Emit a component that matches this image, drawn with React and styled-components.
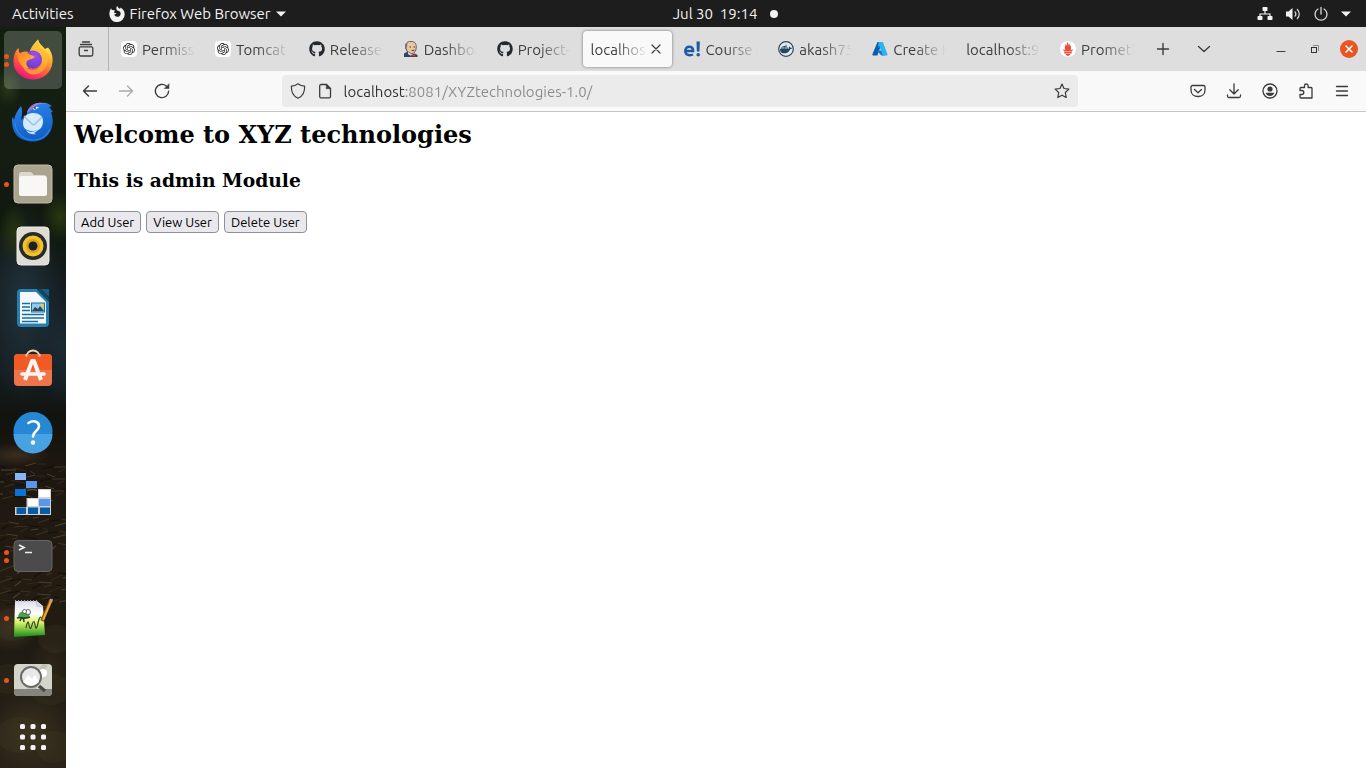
import React from "react";
import styled, { createGlobalStyle, css } from "styled-components";
import { SiOpenai, SiPrometheus, SiDocker } from "react-icons/si";
import { FaGithub } from "react-icons/fa";

const UI_FONT = '"Ubuntu", "Noto Sans", "Open Sans", sans-serif';

const GlobalStyle = createGlobalStyle`
  *, *::before, *::after { box-sizing: border-box; }
  body { margin: 0; background: #fff; font-family: ${UI_FONT}; }
  button { font: inherit; color: inherit; border: 0; padding: 0; background: none; cursor: default; }
  svg { display: block; flex: none; }
`;

/* ---------- desktop shell ---------- */

const Desktop = styled.div`
  display: grid;
  grid-template: 27px minmax(0, 1fr) / 66px minmax(0, 1fr);
  min-height: 100vh;
`;

const TopBar = styled.header`
  grid-column: 1 / -1;
  display: grid;
  grid-template-columns: minmax(0, 15fr) auto minmax(0, 13fr);
  align-items: center;
  padding: 0 15px 0 12px;
  background: #1d1d1d;
  color: #f2f2f2;
  font-size: 15px;
  line-height: 20px;
`;

const BarGroup = styled.div`
  display: flex;
  align-items: center;
  justify-content: ${(p) => (p.$end ? "flex-end" : "flex-start")};
  gap: ${(p) => p.$gap}px;
`;

const BarButton = styled.button`
  display: flex;
  align-items: center;
  gap: ${(p) => p.$gap || 5}px;
  white-space: pre;
`;

const StatusDot = styled.span`
  width: 8px;
  height: 8px;
  border-radius: 50%;
  background: #f2f2f2;
`;

const Dock = styled.nav`
  position: relative;
  display: flex;
  flex-direction: column;
  gap: 4px;
  padding: 4px;
  background:
    radial-gradient(ellipse 14px 20px at 8px 60px, #2b3a1c, transparent),
    radial-gradient(ellipse 20px 26px at 60px 190px, #28380f, transparent),
    radial-gradient(ellipse 16px 30px at 14px 205px, #26340f, transparent),
    radial-gradient(ellipse 40px 100px at 24px 275px, #22323d, transparent),
    radial-gradient(ellipse 24px 60px at 62px 320px, #1b2a33, transparent),
    radial-gradient(ellipse 34px 12px at 16px 428px, #3b2e1f, transparent),
    radial-gradient(ellipse 30px 26px at 10px 600px, #3a3120, transparent),
    radial-gradient(ellipse 24px 30px at 50px 640px, #2d2618, transparent),
    radial-gradient(ellipse 40px 40px at 30px 705px, #3a3220, transparent),
    linear-gradient(#12200f 0, #151c12 130px, #10170f 200px, #141d20 260px, #151d20 350px, #11130f 390px, #1b1610 430px, #241c12 540px, #1f1a12 620px, #2a2418 100%);
`;

const Wallpaper = styled.svg`
  position: absolute;
  left: 0;
  top: 390px;
`;

const DockItem = styled.button`
  position: relative;
  display: flex;
  align-items: center;
  justify-content: center;
  height: ${(p) => (p.$short ? 50 : 58)}px;
  border-radius: 5px;
  background: ${(p) => (p.$active ? "rgba(255, 255, 255, 0.2)" : "none")};
`;

const RunningDots = styled.span`
  position: absolute;
  left: 0;
  top: 0;
  bottom: 0;
  display: flex;
  flex-direction: column;
  justify-content: center;
  gap: 3px;
  i {
    width: 5px;
    height: 5px;
    border-radius: 50%;
    background: #e95420;
  }
`;

/* ---------- browser ---------- */

const Browser = styled.section`
  display: flex;
  flex-direction: column;
  min-width: 0;
  background: #fff;
`;

const TabStrip = styled.div`
  display: flex;
  align-items: stretch;
  height: 44px;
  background: #dedede;
  color: #3d3d3d;
  font-size: 15px;
  line-height: 20px;
`;

const StripButton = styled.button`
  display: grid;
  place-items: center;
  width: ${(p) => p.$w}px;
  ${(p) =>
    p.$divider &&
    css`
      padding-right: 2px;
      border-right: 1px solid #b4b4b4;
      margin-right: 2px;
    `}
`;

const Tabs = styled.div`
  display: flex;
  flex: 0 1 1033px;
  min-width: 0;
`;

const Tab = styled.div`
  display: flex;
  align-items: center;
  flex: 1 1 0;
  min-width: 0;
  margin: 4px 2px;
  padding: 0 8px;
  border-radius: 4px;
  ${(p) =>
    p.$active &&
    css`
      background: #f9f9f9;
      box-shadow: 0 0 3px rgba(0, 0, 0, 0.5);
    `}
`;

const TabButton = styled.button`
  display: flex;
  align-items: center;
  gap: 5px;
  flex: 1;
  min-width: 0;
  text-align: left;
`;

const TabLabel = styled.span`
  flex: 1;
  padding-top: 2px;
  overflow: hidden;
  white-space: nowrap;
  mask-image: linear-gradient(to left, transparent, #000 32px);
`;

const Spacer = styled.div`
  flex: 1 1 0;
`;

const Toolbar = styled.div`
  display: flex;
  align-items: center;
  height: 41px;
  padding: 0 6px;
  background: #f9f9f9;
  border-bottom: 1px solid #c4c4c4;
  color: #3b3b3b;
`;

const ToolButton = styled.button`
  display: grid;
  place-items: center;
  width: 36px;
  height: 32px;
  color: ${(p) => (p.disabled ? "#ababab" : "#3b3b3b")};
`;

const UrlBar = styled.div`
  display: flex;
  align-items: center;
  flex: 8 1 0;
  min-width: 0;
  height: 32px;
  margin: 0 4px;
  padding: 0 8px;
  gap: 11px;
  border-radius: 4px;
  background: #ebebeb;
`;

const UrlInput = styled.input`
  flex: 1;
  min-width: 0;
  height: 24px;
  padding: 0;
  border: 0;
  outline: 0;
  font: 15px/20px ${UI_FONT};
  color: #8a8a8a;
  background: linear-gradient(to right, #2f2f2f 62px, #8a8a8a 62px);
  background-clip: text;
  -webkit-text-fill-color: transparent;
`;

const Page = styled.main`
  padding: 8px;
  color: #000;
  font-family: "DejaVu Serif", serif;
`;

const Title = styled.h2`
  margin: 0 0 20px;
  font-size: 24px;
  line-height: 29px;
`;

const Subtitle = styled.h3`
  margin: 0 0 19px;
  line-height: 23px;
`;

const Actions = styled.div`
  display: flex;
  gap: 5px;
`;

const ActionButton = styled.button`
  height: 22px;
  padding: 0 6px;
  border: 1px solid #8f8f9d;
  border-radius: 4px;
  background: #e9e9ed;
  font: 13px/18px ${UI_FONT};
`;

/* ---------- line icons ---------- */

const Line = ({ size = 16, w = 1.3, children }) => (
  <svg width={size} height={size} viewBox="0 0 16 16" fill="none" stroke="currentColor" strokeWidth={w} strokeLinecap="round" strokeLinejoin="round" aria-hidden="true">
    {children}
  </svg>
);

const FirefoxMono = () => (
  <svg width="16" height="16" viewBox="0 0 16 16" aria-hidden="true">
    <path fill="#f2f2f2" d="M8.300 0c.3 1.300 1.300 2 2.500 2.800.5-.1.800-.5.700-1.200C14 2.900 15.700 5.300 15.700 8.400A7.600 7.600 0 0 1 .4 8.500C.3 6 1 3.700 2.300 2.300c0 .8.200 1.300.5 1.800 1.100-.3 2.300-.1 3.400.7-.8.400-1.300 1-1.300 1.700.5.500 1.500.5 2.500.5-.2.900-1.300 1-2.100 1.600.5 1.500 1.700 2.200 3 2.200 2 0 3.500-1.600 3.300-3.500C11.400 5.600 9.800 4.600 8.300 4.600 7 3 7 1.200 8.300 0Z" />
  </svg>
);

const Caret = () => (
  <svg width="10" height="6" viewBox="0 0 10 6" aria-hidden="true"><path d="M0 .5h10L5 5.500Z" fill="#f2f2f2" /></svg>
);

const Network = () => (
  <svg width="16" height="16" viewBox="0 0 16 16" aria-hidden="true">
    <path d="M8 4v4M3 12V8h10v4" fill="none" stroke="#f2f2f2" strokeWidth="1.200" />
    <g fill="#f2f2f2"><rect x="5.500" y="1" width="5" height="4" rx=".8" /><rect x=".5" y="10" width="5" height="4" rx=".8" /><rect x="10.500" y="10" width="5" height="4" rx=".8" /></g>
  </svg>
);

const Volume = () => (
  <svg width="16" height="16" viewBox="0 0 16 16" aria-hidden="true">
    <path d="M1 5.500h2.500L7.500 2v12l-4-3.500H1Z" fill="#f2f2f2" />
    <path d="M10 5.800c1.200 1.400 1.200 3 0 4.400M12.300 3.500c2.600 2.600 2.600 6.400 0 9" fill="none" stroke="#d8d8d8" strokeWidth="1.200" strokeLinecap="round" />
  </svg>
);

const Power = () => (
  <svg width="16" height="16" viewBox="0 0 16 16" fill="none" stroke="#d8d8d8" strokeWidth="1.300" strokeLinecap="round" aria-hidden="true">
    <path d="M8 1.500V8M5 3a6 6 0 1 0 6 0" />
  </svg>
);

const FirefoxView = () => (
  <Line><path d="M4.500 1h7M2.500 3.500h11M2.500 5.800h11A1.300 1.300 0 0 1 14.800 7v6.500a1.500 1.500 0 0 1-1.500 1.500H2.700a1.500 1.500 0 0 1-1.500-1.500V7a1.300 1.300 0 0 1 1.300-1.200ZM6.500 9.500h3" /></Line>
);

const Shield = () => <Line w={1.2}><path d="M8 .8c2 1.600 4.200 2.300 6.600 2.300C14.900 8.500 12.800 13.200 8 15.200 3.200 13.200 1.100 8.500 1.400 3.100 3.800 3.100 6 2.400 8 .8Z" /></Line>;
const PageIcon = () => (
  <Line><path d="M4 1.500h5.500l4 4v8a1.300 1.300 0 0 1-1.300 1.300H4a1.300 1.300 0 0 1-1.300-1.300V2.800A1.300 1.300 0 0 1 4 1.500Z" /><path d="M9.300 1.500v4.200h4.200Z" fill="currentColor" strokeWidth=".6" /></Line>
);
const Star = () => <Line w={1.2}><path d="m8 1 2 4.500 4.900.6-3.600 3.400.9 5L8 12.200l-4.200 2.300.9-5L1.100 6.100 6 5.500Z" /></Line>;

const Reload = () => (
  <Line w={1.4}><path d="M14.600 8.200A6.600 6.600 0 1 1 12.300 3" /><path d="M15 1v4.500h-4.500Z" fill="currentColor" strokeWidth=".5" /></Line>
);

const Account = () => (
  <svg width="16" height="16" viewBox="0 0 16 16" aria-hidden="true">
    <circle cx="8" cy="8" r="7" fill="none" stroke="currentColor" strokeWidth="1.300" />
    <circle cx="8" cy="6" r="2.600" fill="currentColor" /><path d="M3.700 9.800h8.600C11.500 12 9.900 13 8 13s-3.500-1-4.300-3.200Z" fill="currentColor" />
  </svg>
);

/* ---------- favicons ---------- */

const OpenAiIcon = () => (
  <svg width="16" height="16" viewBox="0 0 16 16" aria-hidden="true">
    <rect width="16" height="16" rx="4" fill="#fff" /><SiOpenai x="2" y="2" size={12} color="#222" />
  </svg>
);

const JenkinsIcon = () => (
  <svg width="16" height="16" viewBox="0 0 16 16" aria-hidden="true">
    <path d="M2.800 7C2 2.500 4 .5 8 .4c4 .1 5.600 2.600 5.200 6.600-.2 3-1.500 5-4.500 5.600L4.500 11Z" fill="#e9c8a4" stroke="#4a3d33" strokeWidth=".8" />
    <path d="M2.300 8C1.500 5 2 2.500 4.800 1.200 3.900 3 4.700 5 3.700 6.500 3.500 8 3 8.500 2.300 8Z" fill="#7d7464" />
    <path d="M6.500 6h1.500M10.500 6H12M8.500 9.300c1 .4 2 .3 3-.2" stroke="#3a302a" strokeWidth=".9" fill="none" />
    <path d="M1 16v-3.500l4-2 4 3 3-1 2.500 1.500V16Z" fill="#2c4560" /><path d="m7 15.500.5-2.500 2.500.7 2.500-1v3l-2.500-.7Z" fill="#c9353b" /><path d="m5 11 4 2.500-1.500 1L5 13Z" fill="#e8e8e8" />
  </svg>
);

const EdurekaIcon = () => (
  <svg width="16" height="16" viewBox="0 0 16 16" aria-hidden="true">
    <path d="M1.500 10h7.600c0-3-1.300-4.300-3.700-4.300S1.300 7.200 1.300 10 2.800 14.200 5.700 14.200c1.300 0 2.300-.2 3.300-.7" fill="none" stroke="#1b5ba3" strokeWidth="2.500" />
    <path d="M12.500 .5h3.300l-.3 10h-2.700Z" fill="#1b5ba3" /><circle cx="14.200" cy="13.700" r="1.800" fill="#1b5ba3" />
  </svg>
);

const DockerIcon = () => (
  <svg width="16" height="16" viewBox="0 0 16 16" aria-hidden="true">
    <circle cx="8" cy="8" r="7.300" fill="#e6ecef" stroke="#27475e" strokeWidth="1.200" /><SiDocker x="2" y="2" size={12} color="#27475e" />
  </svg>
);

const AzureIcon = () => (
  <svg width="16" height="16" viewBox="0 0 16 16" aria-hidden="true">
    <path d="M5.500 1h4.700L5.400 14.500H1.200c-.8 0-1-.6-.8-1.200Z" fill="#0b5cab" />
    <path d="M4.500 9.500h7l1.300 5H9.500Z" fill="#0a78d4" />
    <path d="M6.500 1h4c.3 0 .5.200.6.500l4.400 12c.2.600-.2 1-.8 1h-3.800L7 4.500 6 7.500Z" fill="#2bb4ee" />
  </svg>
);

const PrometheusIcon = () => (
  <svg width="16" height="16" viewBox="0 0 16 16" aria-hidden="true">
    <circle cx="8" cy="8" r="7" fill="#ee4b37" /><SiPrometheus x="0" y="0" size={16} color="#fff" />
  </svg>
);

/* ---------- dock icons ---------- */

const Icon = ({ children }) => (
  <svg width="44" height="44" viewBox="0 0 44 44" aria-hidden="true">{children}</svg>
);

const Firefox = () => (
  <Icon>
    <defs>
      <linearGradient id="ffBody" x1=".8" y1=".1" x2=".35" y2="1"><stop offset="0" stopColor="#fff04a" /><stop offset=".35" stopColor="#ffa72e" /><stop offset=".65" stopColor="#ff5a3c" /><stop offset="1" stopColor="#f0147e" /></linearGradient>
      <radialGradient id="ffGlobe" cx=".6" cy=".3" r=".8"><stop offset="0" stopColor="#a24ff0" /><stop offset="1" stopColor="#5a3bc8" /></radialGradient>
      <linearGradient id="ffTail" x1="0" y1="0" x2="1" y2="1"><stop offset="0" stopColor="#ff7a2a" /><stop offset="1" stopColor="#ffbd32" /></linearGradient>
    </defs>
    <path d="M27 1.500c1 4 4 6 7 9.500l3-1.500c4 5 5 9.500 4.500 14.500C40.500 35 32 41.500 22 41.500S2.500 34 2.500 24c0-6 1.500-11 5-14 0 3 0 4 1 6 3-3 7-3 10-1 1-6 5-9.500 8.500-13.500Z" fill="url(#ffBody)" />
    <path d="M27 1.500c-4 3.500-6 7.500-6 11.500 5 0 9 3 10 8 1 6-3 11-9 11-6 0-10-4-12-9 2 10 8 15 16 13 8-2 12-10 10-18-2-7-8-9-9-16.500Z" fill="#ffbd35" opacity=".65" />
    <circle cx="22" cy="21.500" r="9" fill="url(#ffGlobe)" />
    <path d="M7.500 10c0 3 1 5 2 6 3-2 6-2 9 .5 2 1 4 1 5 2-1 3-4 2-7 4-2 2-1 5 1 8-6-1-10-5-11-12-.5-4 0-6 1-8.500Z" fill="url(#ffTail)" />
  </Icon>
);

const Thunderbird = () => (
  <Icon>
    <defs><linearGradient id="tb" x1=".4" y1="0" x2=".6" y2="1"><stop offset="0" stopColor="#2b82e8" /><stop offset="1" stopColor="#0d5cc4" /></linearGradient></defs>
    <path d="M10 6c2 5 1 9 0 14l6-6C17 6 24 2 31 3c4-1 7 1 10 3l-3 1 4 5-2 .5c5 12-1 29-18 29C7 41.500 1 32 1 21c0-2 0-3 1-4l1 3c1-6 4-10 7-14Z" fill="url(#tb)" />
    <path d="M16 12C20 3 28 1 36 4c-7-1-12 1-15 5l-5 4Z" fill="#a878dd" />
    <path d="M12 23c0-6 4-10 10-10s10 3 10 8c0 7-4 10-10 10s-10-2-10-8Z" fill="#d6ebff" />
    <path d="m13 16 8 8c1 1 2 1 3 0l7-7" fill="none" stroke="#9cc2e8" strokeWidth="1.500" />
    <path d="M15 30c4 3 8 2 13-1-2 2-4 4-5 4 1 1 2 1 3 1-5 1-9 0-11-4Z" fill="#bfe1ff" />
    <path d="M22 8.500q3-3 6-1l-5 2.500Z" fill="#fff" /><circle cx="24" cy="8" r="1" fill="#123b7a" />
    <path d="M4 23c1 10 8 17 18 17 8 0 14-4 17-11" fill="none" stroke="#4696ef" strokeWidth="1.200" opacity=".6" />
  </Icon>
);

const Files = () => (
  <Icon>
    <rect x="3" y="3" width="38" height="38" rx="4" fill="#aaa38e" stroke="#c1bbab" />
    <path d="M8 12q0-2 2-2h10l3 3h10q2 0 2 2v15H8Z" fill="#ddd8ce" /><rect x="8" y="14" width="28" height="20" rx="2" fill="#f8f7f5" />
  </Icon>
);

const Rhythmbox = () => (
  <Icon>
    <rect x="6" y="3" width="32" height="38" rx="4" fill="#dfdcd3" stroke="#eeece6" />
    <circle cx="22" cy="22" r="14" fill="#292a2e" /><circle cx="22" cy="22" r="10.500" fill="#f2c22c" /><circle cx="22" cy="22" r="7" fill="#b88c14" opacity=".5" /><circle cx="22" cy="22" r="4.500" fill="#1f2023" />
  </Icon>
);

const Writer = () => (
  <Icon>
    <path d="M10 3h17l11 10v24a4 4 0 0 1-4 4H10a4 4 0 0 1-4-4V7a4 4 0 0 1 4-4Z" fill="#277fae" />
    <path d="M30 3h8v8Z" fill="#1a5f88" /><path d="M26 3h4l8 9v4L26 4Z" fill="#134660" />
    <path d="M9 6h16l10 10v21.500H9Z" fill="#f5f8fa" />
    <path d="M11 17.500h8M11 21h8M11 24.500h8M11 28.500h22M11 32h22M11 35.500h16" stroke="#176d9e" strokeWidth="1.600" />
    <rect x="20.500" y="17" width="13" height="9" fill="#8fcbed" stroke="#176d9e" /><path d="m21 25 3-4 3 2 2-3 4 5Z" fill="#354552" /><circle cx="31" cy="19" r="1.500" fill="#f8cf28" />
  </Icon>
);

const Software = () => (
  <Icon>
    <path d="M15.500 9.500c0-9.500 13-9.500 13 0" fill="none" stroke="#e7dab5" strokeWidth="2" />
    <rect x="3" y="6" width="38" height="32" rx="4" fill="#ef7449" /><path d="M3 22V10a4 4 0 0 1 4-4h30a4 4 0 0 1 4 4v12Z" fill="#f05a24" />
    <path d="M15.500 6v2.500M28.500 6v2.500" stroke="#e7dab5" strokeWidth="2" />
    <path d="m14 32 7-19h2l7 19" fill="none" stroke="#f7f5f2" strokeWidth="4" strokeLinejoin="round" /><path d="M11 26h22" stroke="#f7f5f2" strokeWidth="3.500" strokeLinecap="round" />
  </Icon>
);

const Help = () => (
  <Icon>
    <circle cx="22" cy="21.500" r="19.500" fill="#2688d4" /><path d="M2.500 24h39a19.500 19.500 0 0 1-39 0Z" fill="#46a2e0" />
    <path d="M17.500 13c4-3 10.500-2 10.500 3 0 5-6 5-6 10.500" fill="none" stroke="#fff" strokeWidth="2.600" strokeLinecap="round" /><circle cx="22" cy="32.500" r="2.200" fill="#fff" />
  </Icon>
);

const Blocks = () => (
  <Icon>
    <path d="M4 35h11.500v-9H27v-9h13v26H4Z" fill="#d1d1cf" />
    <rect x="4" y="1" width="11" height="7" fill="#86b7f8" /><rect x="15" y="9" width="11" height="7" fill="#5797ec" /><rect x="4" y="17" width="11" height="7" fill="#0874d8" />
    <path d="M16 18.500q6-2 10 0" fill="none" stroke="#594c28" strokeWidth="1.500" />
    <rect x="28" y="18" width="11" height="7" fill="#fff" /><rect x="17" y="27" width="10" height="7" fill="#fff" /><rect x="28" y="27" width="11" height="7" fill="#5797ec" />
    <path d="M5.500 35.500H15V42H5.500ZM17 35.500h10V42H17ZM29 35.500h10V42H29Z" fill="#075ca5" />
  </Icon>
);

const Terminal = () => (
  <Icon>
    <rect x="3" y="6.500" width="38" height="31" rx="4" fill="#4b4b4b" stroke="#656565" />
    <path d="m8 11 5 2.500L8 16M14 18.500h7" fill="none" stroke="#eee" strokeWidth="1.700" />
  </Icon>
);

const NotepadIcon = () => (
  <Icon>
    <defs><linearGradient id="np" x1="0" y1="0" x2="0" y2="1"><stop offset="0" stopColor="#dcdce8" /><stop offset=".35" stopColor="#fff" /><stop offset=".6" stopColor="#d8f06a" /><stop offset="1" stopColor="#168d16" /></linearGradient></defs>
    <path d="M4 5h22l6 5 2 29-31 2Z" fill="url(#np)" /><path d="m25 5 1 5 6 1" fill="#d6d6e3" stroke="#aaa" strokeWidth=".5" />
    <path d="M4 5h22" stroke="#aaa" strokeWidth="2" strokeDasharray="1 2" />
    <ellipse cx="13" cy="19" rx="6" ry="4" fill="#48a548" transform="rotate(-20 13 19)" /><circle cx="17" cy="16" r="2.500" fill="#fff" stroke="#333" strokeWidth=".7" /><circle cx="13.500" cy="15.500" r="2" fill="#fff" stroke="#333" strokeWidth=".7" />
    <path d="M6 22c4-2 7 2 13-1M9 25c2-5 4-3 4 1" fill="none" stroke="#273d22" strokeWidth="1.500" />
    <path d="M15 32q2-10 3-3t3 0 3 0 3-2 4-4" fill="none" stroke="#394822" strokeWidth="1.200" />
    <path d="m31 25 9-21" stroke="#825018" strokeWidth="3.500" /><path d="m32 24 8-19" stroke="#f2ab28" strokeWidth="2" /><path d="m39.500 6 1.200-3" stroke="#c99798" strokeWidth="3" />
  </Icon>
);

const ImageViewer = () => (
  <Icon>
    <rect x="3" y="6" width="38" height="32" rx="4" fill="#d3d5ca" /><path d="M3 31h38v3a4 4 0 0 1-4 4H7a4 4 0 0 1-4-4Z" fill="#85857e" />
    <path d="M31 6h6L25 31h-9Z" fill="#bfc2b5" /><circle cx="32" cy="15" r="4" fill="#fff" />
    <circle cx="20" cy="19" r="10" fill="#e6e9e6" stroke="#6b6b67" strokeWidth="2" /><path d="m12 24 5-7 4 4 3-4 4 7q-8 7-16 0Z" fill="#fff" />
    <path d="m28 28 6 5" stroke="#484848" strokeWidth="3.500" />
  </Icon>
);

const AppGrid = () => (
  <Icon>
    {[8, 18.500, 29].map((y) => [9, 19.500, 30].map((x) => <rect key={`${x}-${y}`} x={x} y={y} width="5" height="5" rx="1.500" fill="#f4f4f2" />))}
  </Icon>
);

const twigs = Array.from({ length: 110 }, (_, i) => ({
  x: (i * 37) % 70,
  y: 30 + ((i * 53) % 160),
  dx: 5 + ((i * 7) % 11),
  dy: ((i * 5) % 9) - 5,
  color: ["#4a3b26", "#3a2d1b", "#0f0c08", "#5a4c36"][i % 4],
}));

const pebbles = [
  [12, 208, 22, 16], [56, 222, 18, 14], [8, 262, 20, 15], [50, 272, 20, 16],
  [20, 318, 24, 18], [54, 330, 18, 16],
];

const dockApps = [
  { name: "Firefox", icon: Firefox, windows: 2, active: true },
  { name: "Thunderbird", icon: Thunderbird },
  { name: "Files", icon: Files, windows: 1 },
  { name: "Rhythmbox", icon: Rhythmbox },
  { name: "LibreOffice Writer", icon: Writer },
  { name: "Ubuntu Software", icon: Software },
  { name: "Help", icon: Help },
  { name: "Storage", icon: Blocks },
  { name: "Terminal", icon: Terminal, windows: 2 },
  { name: "Notepad", icon: NotepadIcon, windows: 1 },
  { name: "Image Viewer", icon: ImageViewer, windows: 1 },
];

const GitHubIcon = () => <FaGithub size={16} color="#24292f" />;

const tabs = [
  { title: "Permiss", icon: OpenAiIcon },
  { title: "Tomcat", icon: OpenAiIcon },
  { title: "Release", icon: GitHubIcon },
  { title: "Dashboa", icon: JenkinsIcon },
  { title: "Project-", icon: GitHubIcon },
  { title: "localhost", active: true },
  { title: "Course C", icon: EdurekaIcon },
  { title: "akash75", icon: DockerIcon },
  { title: "Create K", icon: AzureIcon },
  { title: "localhost:9" },
  { title: "Prometh", icon: PrometheusIcon },
];

export default function App() {
  return (
    <Desktop>
      <GlobalStyle />
      <TopBar>
        <BarGroup $gap={35}>
          <BarButton>Activities</BarButton>
          <BarButton><FirefoxMono />Firefox Web Browser<Caret /></BarButton>
        </BarGroup>
        <BarButton $gap={13}>{"Jul 30  19:14"}<StatusDot /></BarButton>
        <BarGroup $end>
          <BarButton $gap={12} aria-label="System menu"><Network /><Volume /><Power /><Caret /></BarButton>
        </BarGroup>
      </TopBar>

      <Dock aria-label="Dock">
        <Wallpaper width="66" height="351" viewBox="0 0 66 351" fill="none" aria-hidden="true">
          {twigs.map((t, i) => <path key={i} d={`M${t.x - 6} ${t.y}l${t.dx} ${t.dy}`} stroke={t.color} strokeWidth="1.200" opacity=".7" />)}
          {pebbles.map(([x, y, rx, ry]) => <ellipse key={y} cx={x} cy={y} rx={rx} ry={ry} fill="#4a3f28" opacity=".22" />)}
        </Wallpaper>
        {dockApps.map(({ name, icon: AppIcon, windows = 0, active }) => (
          <DockItem key={name} aria-label={name} $active={active}>
            {windows > 0 && <RunningDots>{Array.from({ length: windows }, (_, i) => <i key={i} />)}</RunningDots>}
            <AppIcon />
          </DockItem>
        ))}
        <DockItem aria-label="Show Applications" $short><AppGrid /></DockItem>
      </Dock>

      <Browser>
        <TabStrip>
          <StripButton $w={43} $divider aria-label="Firefox View"><FirefoxView /></StripButton>
          <Tabs>
            {tabs.map(({ title, icon: Favicon, active }) => (
              <Tab key={title} $active={active}>
                <TabButton>
                  {Favicon && <Favicon />}
                  <TabLabel>{title}</TabLabel>
                </TabButton>
                {active && <button aria-label="Close tab"><Line w={1.2}><path d="m4 4 8 8M12 4l-8 8" /></Line></button>}
              </Tab>
            ))}
          </Tabs>
          <StripButton $w={38} aria-label="New tab"><Line w={1.4}><path d="M8 2.500v11M2.500 8h11" /></Line></StripButton>
          <StripButton $w={44} aria-label="List all tabs"><Line w={1.4}><path d="m2.500 5.500 5.500 5 5.500-5" /></Line></StripButton>
          <Spacer />
          <StripButton $w={34} aria-label="Minimize"><Line w={1.2}><path d="M4 10.500h8" /></Line></StripButton>
          <StripButton $w={34} aria-label="Restore">
            <svg width="16" height="16" viewBox="0 0 16 16" fill="none" aria-hidden="true"><path d="M6 4.500h5.500V10" stroke="#8a8a8a" /><rect x="4.500" y="6.500" width="5" height="5" stroke="#333" /></svg>
          </StripButton>
          <StripButton $w={34} aria-label="Close window">
            <svg width="18" height="18" viewBox="0 0 18 18" aria-hidden="true"><circle cx="9" cy="9" r="9" fill="#e95420" /><path d="m5.500 5.500 7 7M12.500 5.500l-7 7" stroke="#fff" strokeWidth="1.500" /></svg>
          </StripButton>
        </TabStrip>

        <Toolbar>
          <ToolButton aria-label="Back"><Line w={1.4}><path d="M14.500 8H1.500M6.500 3l-5 5 5 5" /></Line></ToolButton>
          <ToolButton aria-label="Forward" disabled><Line w={1.4}><path d="M1.500 8h13M9.500 3l5 5-5 5" /></Line></ToolButton>
          <ToolButton aria-label="Reload"><Reload /></ToolButton>
          <Spacer />
          <UrlBar>
            <Shield />
            <PageIcon />
            <UrlInput aria-label="Address" defaultValue="localhost:8081/XYZtechnologies-1.0/" spellCheck={false} />
            <button aria-label="Bookmark this page"><Star /></button>
          </UrlBar>
          <Spacer />
          <ToolButton aria-label="Save to Pocket"><Line><path d="M2.500 2.500h11A1.500 1.500 0 0 1 15 4v3c0 4-3 6.500-7 6.500S1 11 1 7V4a1.500 1.500 0 0 1 1.500-1.500ZM4.500 6.500 8 9.800l3.500-3.300" /></Line></ToolButton>
          <ToolButton aria-label="Downloads"><Line><path d="M8 .8v10M3.800 6.800 8 11l4.200-4.200M1.500 12v1A1.500 1.500 0 0 0 3 14.500h10a1.500 1.500 0 0 0 1.500-1.500v-1" /></Line></ToolButton>
          <ToolButton aria-label="Account"><Account /></ToolButton>
          <ToolButton aria-label="Extensions"><Line><path d="M2 7.500V5.500Q2 4.500 3 4.500h3.500V2.800a1.800 1.800 0 0 1 3.600 0v1.700H13q1 0 1 1V15H3q-1 0-1-1v-2.500h1.800a2 2 0 0 0 0-4Z" /></Line></ToolButton>
          <ToolButton aria-label="Menu"><Line><path d="M2.500 3.500h11M2.500 8h11M2.500 12.500h11" /></Line></ToolButton>
        </Toolbar>

        <Page>
          <Title>Welcome to XYZ technologies</Title>
          <Subtitle>This is admin Module</Subtitle>
          <Actions>
            <ActionButton>Add User</ActionButton>
            <ActionButton>View User</ActionButton>
            <ActionButton>Delete User</ActionButton>
          </Actions>
        </Page>
      </Browser>
    </Desktop>
  );
}
